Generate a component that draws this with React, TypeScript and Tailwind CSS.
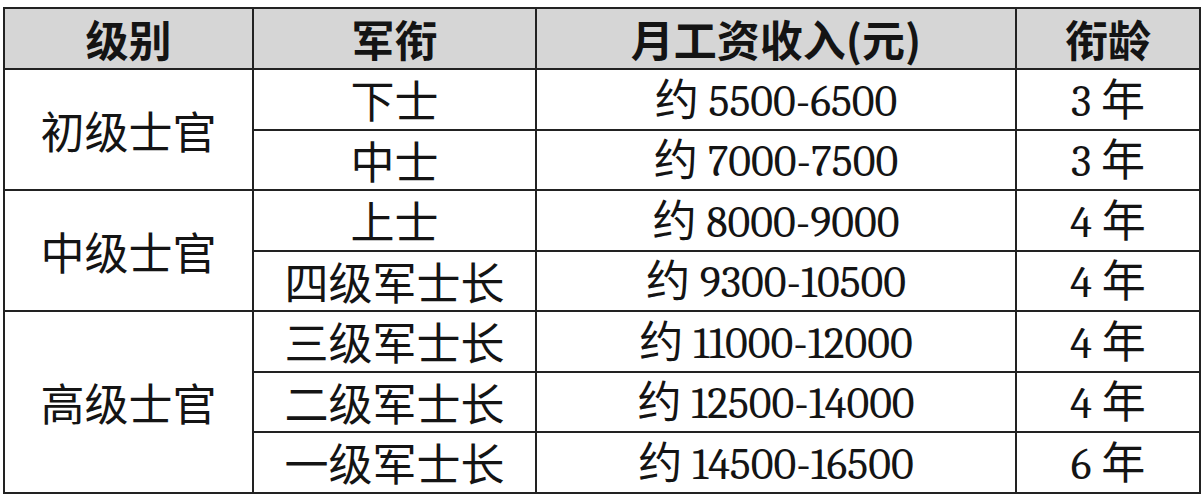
import React from 'react';

interface Row {
  group?: string;
  span?: number;
  rank: string;
  pay: string;
  years: string;
}

const rows: Row[] = [
  { group: '初级士官', span: 2, rank: '下士', pay: '5500-6500', years: '3' },
  { rank: '中士', pay: '7000-7500', years: '3' },
  { group: '中级士官', span: 2, rank: '上士', pay: '8000-9000', years: '4' },
  { rank: '四级军士长', pay: '9300-10500', years: '4' },
  { group: '高级士官', span: 3, rank: '三级军士长', pay: '11000-12000', years: '4' },
  { rank: '二级军士长', pay: '12500-14000', years: '4' },
  { rank: '一级军士长', pay: '14500-16500', years: '6' },
];

const cell = 'border-2 border-[#222] text-center align-middle p-0 leading-none';

export default function App() {
  return (
    <div className="w-[1203px] h-[500px] bg-white pt-[7px] pl-[3px]">
      <table className="table-fixed border-collapse w-[1196px] font-['Noto_Sans_CJK_SC'] text-[#141414]">
        <colgroup>
          <col className="w-[249px]" />
          <col className="w-[283px]" />
          <col className="w-[480px]" />
          <col className="w-[184px]" />
        </colgroup>
        <thead>
          <tr className="h-[61px] bg-[#d6d6d6] text-[43px] font-bold">
            <th className={cell}>级别</th>
            <th className={cell}>军衔</th>
            <th className={cell}>月工资收入(元)</th>
            <th className={cell}>衔龄</th>
          </tr>
        </thead>
        <tbody>
          {rows.map((r) => (
            <tr key={r.rank} className="h-[60.5px] text-[44px]">
              {r.group && (
                <td rowSpan={r.span} className={cell}>
                  {r.group}
                </td>
              )}
              <td className={cell}>{r.rank}</td>
              <td className={cell}>
                约 <span className="font-serif">{r.pay}</span>
              </td>
              <td className={cell}>
                <span className="font-serif">{r.years}</span> 年
              </td>
            </tr>
          ))}
        </tbody>
      </table>
    </div>
  );
}
